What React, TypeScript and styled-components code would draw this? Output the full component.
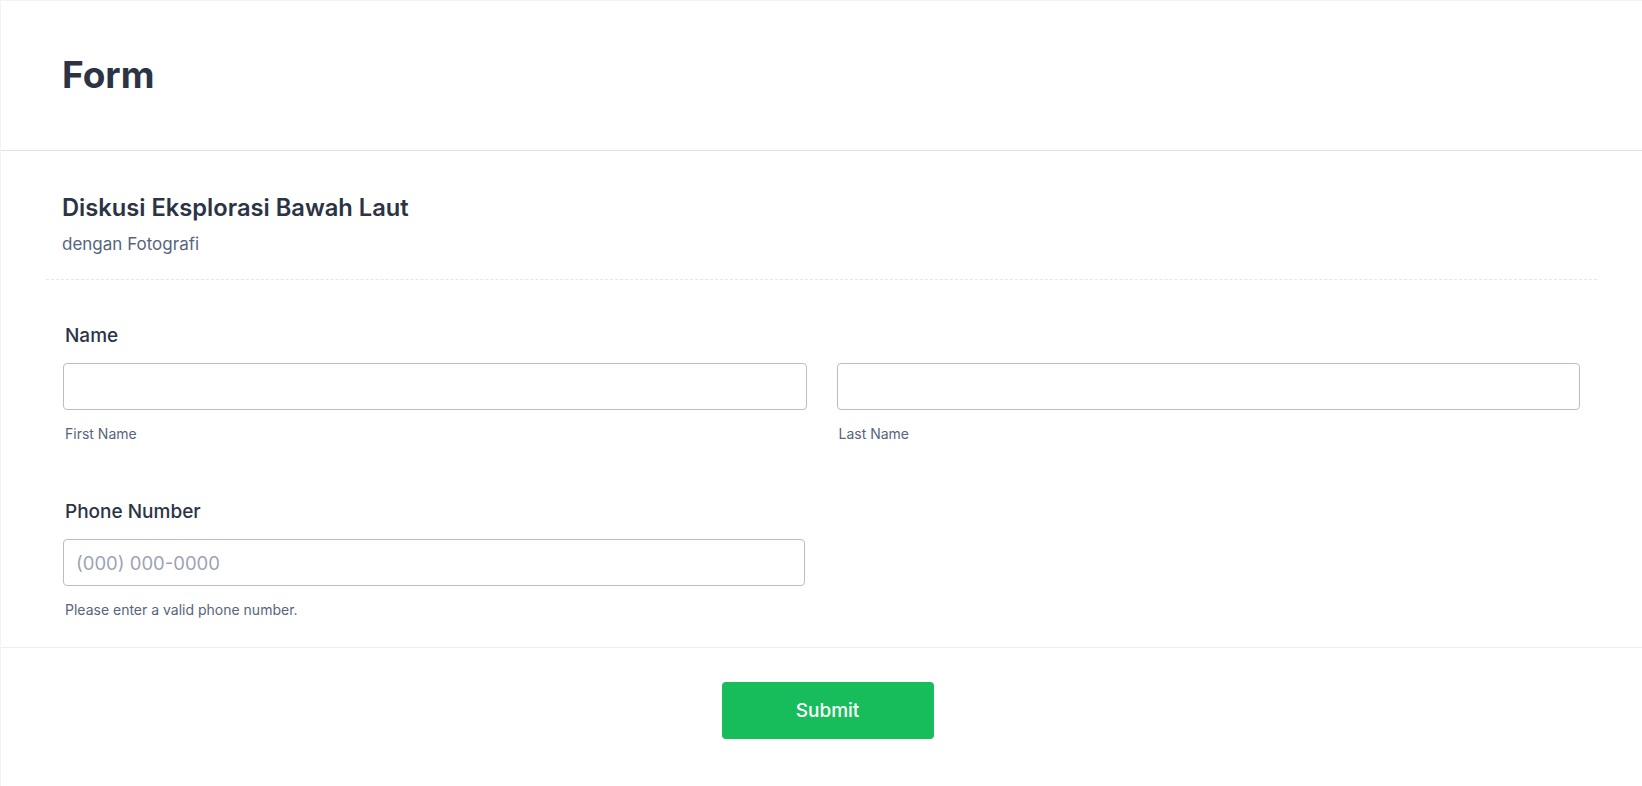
import React from "react";
import styled, { createGlobalStyle } from "styled-components";

const GlobalStyle = createGlobalStyle`
  html, body {
    margin: 0;
    padding: 0;
    background: #ffffff;
  }
  body {
    font-family: Inter, "Noto Sans", Arial, sans-serif;
    color: #2c3345;
    -webkit-font-smoothing: antialiased;
  }
  * { box-sizing: border-box; }
`;

const Card = styled.div`
  border-top: 1px solid #f1f2fa;
  border-left: 1px solid #f1f2fa;
  min-height: 786px;
  display: flex;
  flex-direction: column;
`;

const Header = styled.header`
  height: 150px;
  display: flex;
  align-items: center;
  padding: 0 0 3px 61px;
  border-bottom: 1px solid #dcdfee;
`;

const Title = styled.h1`
  margin: 0;
  font-size: 37px;
  font-weight: 700;
  line-height: 45px;
  color: #2c3345;
`;

const Section = styled.section`
  padding: 42px 45px 29px;
  border-bottom: 1px solid #eceef6;
`;

const Heading = styled.div`
  padding: 0 16px 24px;
  border-bottom: 1px dashed #e4e6ee;
`;

const HeadingTitle = styled.h2`
  margin: 0;
  font-size: 23.7px;
  font-weight: 600;
  line-height: 30px;
  color: #2c3345;
`;

const HeadingSub = styled.p`
  margin: 11px 0 0;
  font-size: 17px;
  line-height: 21px;
  color: #57647e;
`;

const Fields = styled.div`
  display: flex;
  flex-direction: column;
  gap: 58px;
  padding: 44px 17px 0;
`;

const Field = styled.div`
  display: flex;
  flex-direction: column;
`;

const Label = styled.label`
  font-size: 19px;
  line-height: 23px;
  font-weight: 500;
  color: #2c3345;
  padding-left: 2px;
  margin-bottom: 16px;
`;

const Row = styled.div`
  display: grid;
  grid-template-columns: 1fr 1fr;
  column-gap: 30px;
`;

const PhoneRow = styled.div`
  width: 742px;
`;

const Control = styled.div`
  display: flex;
  flex-direction: column;
`;

const Input = styled.input`
  height: 47px;
  width: 100%;
  border: 1px solid #b8bdc9;
  border-radius: 4px;
  padding: 0 12px;
  font-family: inherit;
  font-size: 18.5px;
  color: #2c3345;
  background: #fff;
  outline: none;
  &::placeholder {
    color: #9ca3b3;
  }
`;

const SubLabel = styled.span`
  margin-top: 15px;
  padding-left: 2px;
  font-size: 14px;
  line-height: 17px;
  color: #57647e;
`;

const Footer = styled.footer`
  display: flex;
  justify-content: center;
  padding: 34px 0 0 12px;
`;

const SubmitButton = styled.button`
  width: 212px;
  height: 57px;
  border: none;
  border-radius: 4px;
  background: #18bd5b;
  color: #ffffff;
  font-family: inherit;
  font-size: 19px;
  font-weight: 500;
  cursor: pointer;
`;

export default function App() {
  return (
    <>
      <GlobalStyle />
      <Card>
        <Header>
          <Title>Form</Title>
        </Header>
        <Section>
          <Heading>
            <HeadingTitle>Diskusi Eksplorasi Bawah Laut</HeadingTitle>
            <HeadingSub>dengan Fotografi</HeadingSub>
          </Heading>
          <Fields>
            <Field>
              <Label>Name</Label>
              <Row>
                <Control>
                  <Input type="text" />
                  <SubLabel>First Name</SubLabel>
                </Control>
                <Control>
                  <Input type="text" />
                  <SubLabel>Last Name</SubLabel>
                </Control>
              </Row>
            </Field>
            <Field>
              <Label>Phone Number</Label>
              <PhoneRow>
                <Control>
                  <Input type="tel" placeholder="(000) 000-0000" />
                  <SubLabel>Please enter a valid phone number.</SubLabel>
                </Control>
              </PhoneRow>
            </Field>
          </Fields>
        </Section>
        <Footer>
          <SubmitButton type="button">Submit</SubmitButton>
        </Footer>
      </Card>
    </>
  );
}
